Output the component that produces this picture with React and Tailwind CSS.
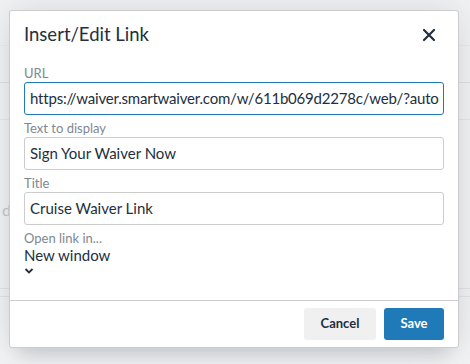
import React from "react";

const Field = ({ label, value, active }) => (
  <div className="flex flex-col">
    <label className="h-[18px] text-[13px] leading-[18px] text-[#7e8791]">{label}</label>
    <div
      className={`h-[33px] rounded-[3px] border px-[5px] text-[15px] leading-[31px] text-[#222f3e] whitespace-nowrap overflow-hidden ${
        active ? "border-[#207ab7] tracking-[-0.2px]" : "border-[#cccccc]"
      }`}
    >
      {value}
    </div>
  </div>
);

const App = () => {
  return (
    <div
      className="relative h-[364px] w-[470px] overflow-hidden bg-[#f3f4f5]"
      style={{ fontFamily: 'Lato, "Open Sans", sans-serif' }}
    >
      {/* page behind the dialog */}
      <div className="flex flex-col">
        <div className="h-[46px] border-b border-[#ebecee]" />
        <div className="h-[37px] border-b border-[#e0e1e3]" />
        <div className="h-[37px] border-b border-[#e6e7e9]" />
        <div className="h-[169px] border-b border-[#e3e4e6] flex items-center">
          <span className="pl-[2px] pt-[12px] text-[16px] text-[#c4c8cc]">d</span>
        </div>
        <div className="h-[8px] border-b border-[#e3e4e6]" />
      </div>

      {/* dialog */}
      <div className="absolute left-[9px] top-[10px] flex h-[338px] w-[450px] flex-col rounded-[3px] border border-[#cccccc] bg-white shadow-[0_16px_16px_-10px_rgba(34,47,62,0.15),0_0_40px_1px_rgba(34,47,62,0.15)]">
        <div className="flex items-center justify-between pl-[14px] pr-[22px] pt-[10px]">
          <h1 className="text-[18.5px] leading-[26px] text-[#222f3e]">Insert/Edit Link</h1>
          <svg width="14" height="14" viewBox="0 0 14 14" className="mt-[1px]">
            <path d="M2 2 L12 12 M12 2 L2 12" stroke="#222f3e" strokeWidth="2.2" strokeLinecap="round" />
          </svg>
        </div>

        <div className="flex flex-1 flex-col gap-[4px] px-[14px] pt-[17px]">
          <Field
            label="URL"
            value="https://waiver.smartwaiver.com/w/611b069d2278c/web/?auto"
            active
          />
          <Field label="Text to display" value="Sign Your Waiver Now" />
          <Field label="Title" value="Cruise Waiver Link" />
          <div className="flex flex-col">
            <label className="h-[18px] text-[13px] leading-[18px] text-[#7e8791]">Open link in...</label>
            <span className="-mt-[1px] text-[15px] leading-[18px] text-[#222f3e]">New window</span>
            <svg width="10" height="8" viewBox="0 0 10 8" className="mt-[3px]">
              <path d="M1.5 2 L5 5.5 L8.5 2" stroke="#222f3e" strokeWidth="1.8" fill="none" />
            </svg>
          </div>
        </div>

        <div className="flex h-[47px] items-center justify-end gap-[8px] border-t border-[#cccccc] px-[14px]">
          <button className="h-[32px] w-[72px] rounded-[3px] bg-[#f0f0f0] text-[13px] font-bold text-[#222f3e]">
            Cancel
          </button>
          <button className="h-[32px] w-[60px] rounded-[3px] bg-[#207ab7] text-[13px] font-bold text-white">
            Save
          </button>
        </div>
      </div>
    </div>
  );
};

export default App;
